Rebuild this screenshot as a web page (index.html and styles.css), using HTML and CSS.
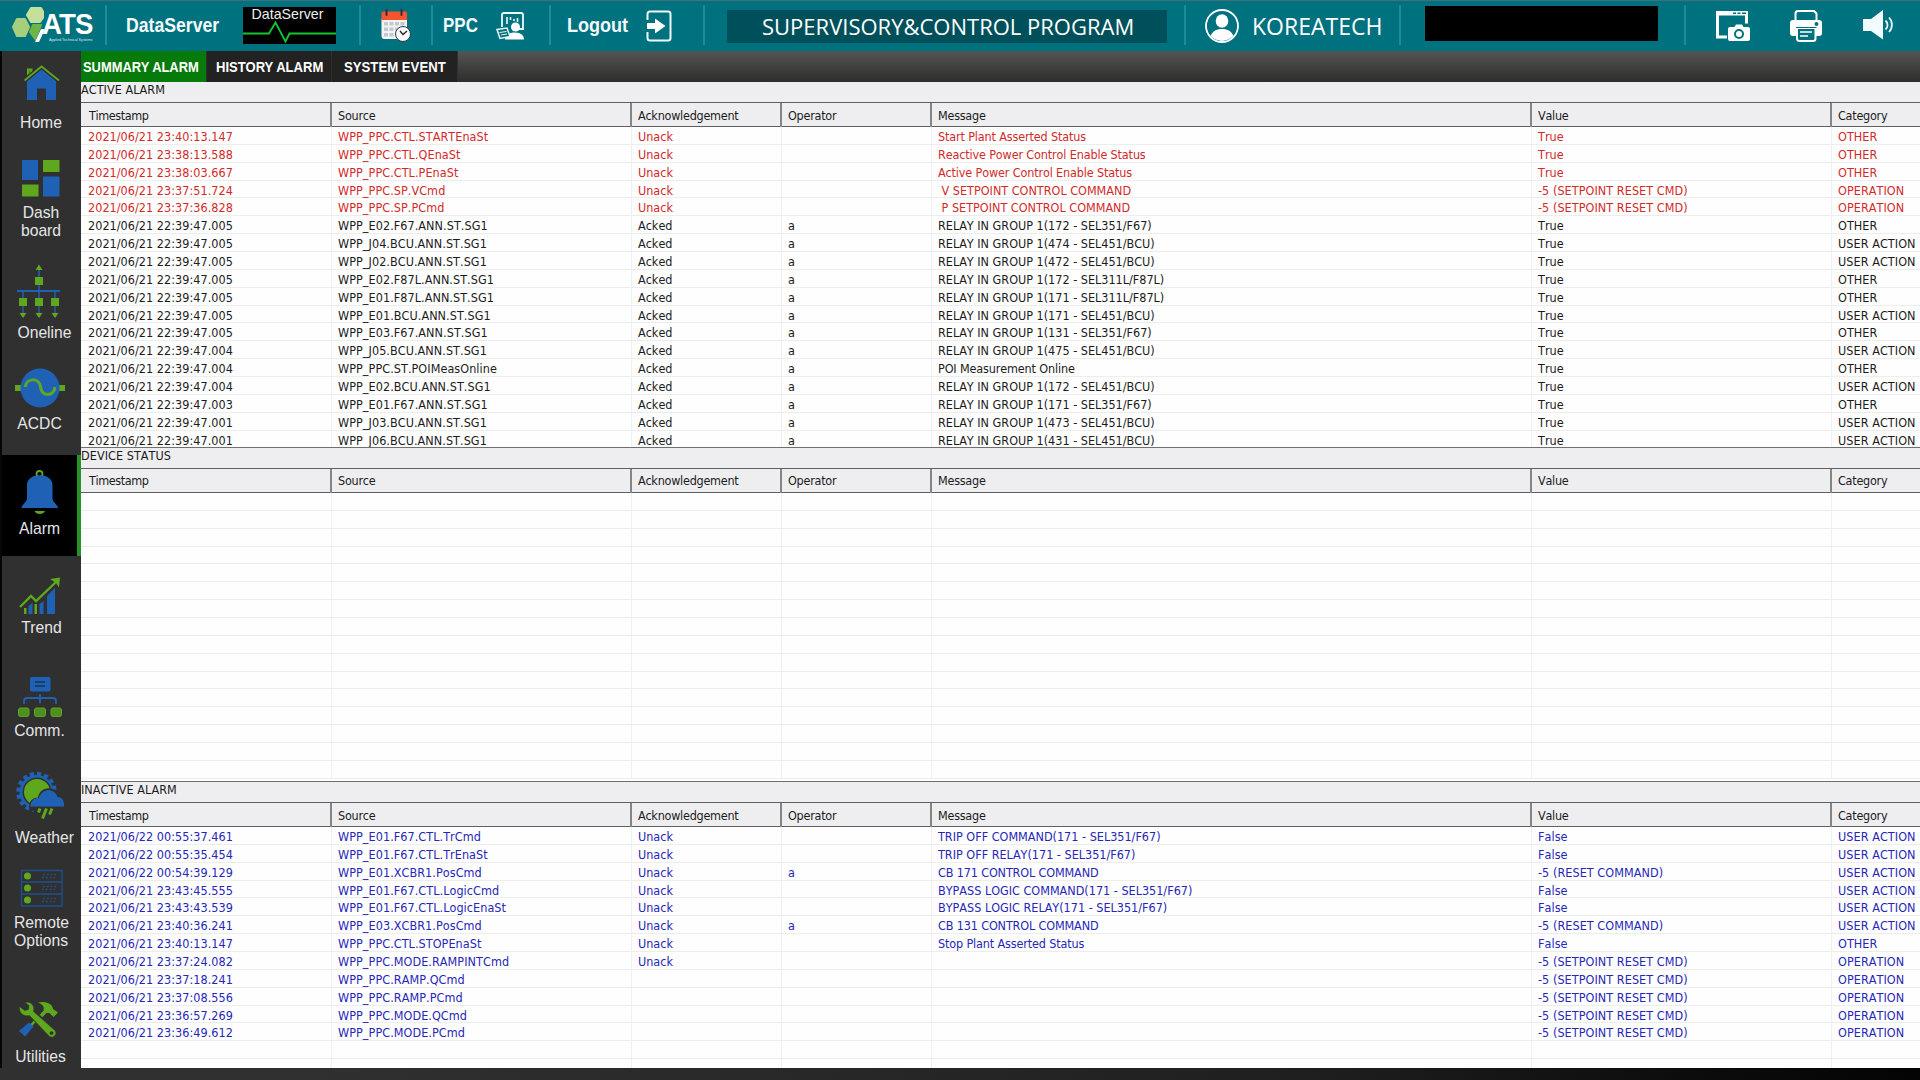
FILE: index.html
```html
<!DOCTYPE html>
<html lang="en">
<head>
<meta charset="utf-8">
<title>Supervisory &amp; Control Program</title>
<link rel="stylesheet" href="styles.css">
</head>
<body>
<header class="topbar">
  <div class="cell brand">
    <svg width="44" height="51" viewBox="0 0 44 51">
      <g stroke-linejoin="round" stroke-width="2">
        <path d="M31 8h10l4 7-5 7H31l-4-7z" fill="#c5e09a" stroke="#c5e09a"/>
        <path d="M17 19h8l4 8-4 9h-8l-4-9z" fill="#a5cf7c" stroke="#a5cf7c"/>
        <path d="M33 25h8l-6 14-5-7z" fill="#6fb544" stroke="#6fb544"/>
      </g>
      <path d="M41 29l-6 13h4l6-13z" fill="#fff"/>
    </svg>
    <div class="brand-name">
      <span class="logo-text">ATS</span>
      <span class="logo-sub">Applied Technical Systems</span>
    </div>
  </div>
  <div class="cell data">
    <span class="nav-text w-data">DataServer</span>
    <div class="monitor">
      <span class="monitor-label">DataServer</span>
      <svg width="93" height="24" viewBox="0 0 93 24"><path d="M0 12.500H26L32.500 1.500L42.500 20.500L46.500 12.500H93" fill="none" stroke="#12c830" stroke-width="1.800"/></svg>
    </div>
  </div>
  <div class="cell cal">
    <svg width="32" height="34" viewBox="380 9 32 34">
      <path d="M381.500 19H407V36a3 3 0 0 1-3 3H384.500a3 3 0 0 1-3-3z" fill="#f3f3f3"/>
      <path d="M383.500 11.500H405a2 2 0 0 1 2 2V20H381.500V13.500a2 2 0 0 1 2-2z" fill="#f4552f"/>
      <path d="M386.500 10v5M401.500 10v5" stroke="#3a2a36" stroke-width="2" stroke-linecap="round"/>
      <g fill="#c3c9d0"><path d="M384 22h4v3.500h-4zM389.500 22h4v3.500h-4zM395 22h4v3.500h-4zM400.500 22h4v3.500h-4zM384 27.500h4v3.500h-4zM389.500 27.500h4v3.500h-4zM395 27.500h4v3.500h-4zM384 33h4v3.500h-4zM389.500 33h4v3.500h-4z"/></g>
      <circle cx="403" cy="34" r="7.500" fill="#fafafa" stroke="#2c3d4d" stroke-width="1"/>
      <path d="M400 31l3 3.500 4-3.500" fill="none" stroke="#222" stroke-width="1.300"/>
    </svg>
  </div>
  <div class="cell ppc">
    <span class="nav-text w-ppc">PPC</span>
    <svg width="30" height="30" viewBox="495 11 30 30">
      <path d="M502 27V15a2 2 0 0 1 2-2H521a2 2 0 0 1 2 2V29H519" fill="none" stroke="#eafafa" stroke-width="1.800"/>
      <path d="M507 24v-7M510.500 20v-3M514 21v-2M517.500 22v-4" stroke="#eafafa" stroke-width="1.600"/>
      <circle cx="515.500" cy="27" r="4.500" fill="#fff"/>
      <path d="M505 39.500c0-4 4-7 10-7s9 3 9 7z" fill="#fff"/>
      <path d="M497 29.500l10-1.500 3 8.500-10 2z" fill="#00717f" stroke="#eafafa" stroke-width="1.500"/>
      <path d="M499.500 32.500l7-1M501 35l6-1" stroke="#eafafa"/>
    </svg>
  </div>
  <div class="cell logout">
    <span class="nav-text w-logout">Logout</span>
    <svg width="28" height="34" viewBox="645 8 28 34">
      <path d="M647.500 19V13a2.500 2.500 0 0 1 2.500-2.500H668a2.500 2.500 0 0 1 2.500 2.500V37a2.500 2.500 0 0 1-2.500 2.500H650a2.500 2.500 0 0 1-2.500-2.500V31" fill="none" stroke="#eefcfc" stroke-width="2"/>
      <path d="M647 22h8V17.500L665.500 25 655 32.500V28h-8z" fill="#fff"/>
    </svg>
  </div>
  <div class="cell program"><div class="program-box"><span class="fit-title">SUPERVISORY&amp;CONTROL PROGRAM</span></div></div>
  <div class="cell user">
    <svg width="36" height="36" viewBox="0 0 36 36">
      <circle cx="18" cy="18" r="16" fill="none" stroke="#fff" stroke-width="1.800"/>
      <ellipse cx="18" cy="13" rx="6.300" ry="6.800" fill="#fff"/>
      <path d="M6.500 28C8.500 23.500 12 21 18 21S27.500 23.500 29.500 28A16 16 0 0 1 6.500 28z" fill="#fff"/>
    </svg>
    <span class="user-name">KOREATECH</span>
  </div>
  <div class="cell clock"><div class="clock-box"></div></div>
  <div class="tools">
    <svg width="36" height="34" viewBox="1715 9 36 34">
      <path fill-rule="evenodd" d="M1716 11h32v12.500h-3V15.500h-26V35.500h8V38.500h-11z" fill="#fff"/>
      <path d="M1733 13.300h3M1737.500 13.300h3M1742 13.300h4" stroke="#00717f" stroke-width="1.600"/>
      <path d="M1730 27h4.500l1.500-2.500h6l1.500 2.500h4.500a2 2 0 0 1 2 2V39a2 2 0 0 1-2 2H1730a2 2 0 0 1-2-2V29a2 2 0 0 1 2-2z" fill="#fff"/>
      <circle cx="1739" cy="34" r="4" fill="none" stroke="#00717f" stroke-width="2"/>
    </svg>
    <svg width="34" height="34" viewBox="1789 8 34 34">
      <path d="M1795.500 21V12.500a2.500 2.500 0 0 1 2.500-2.500h16l2.500 2.500V21" fill="none" stroke="#fff" stroke-width="2"/>
      <path d="M1793 19h26a3 3 0 0 1 3 3v10a3 3 0 0 1-3 3h-26a3 3 0 0 1-3-3V22a3 3 0 0 1 3-3z" fill="#fff"/>
      <path d="M1797 27h18.500v10.500a2.500 2.500 0 0 1-2.500 2.500h-13.500a2.500 2.500 0 0 1-2.500-2.500z" fill="#00717f" stroke="#fff" stroke-width="2"/>
      <path d="M1796 26.500h20.500" stroke="#00717f" stroke-width="1"/>
      <path d="M1800 31h12M1800 35h8" stroke="#fff" stroke-width="1.600"/>
      <circle cx="1816.500" cy="23" r="2" fill="#00717f"/>
    </svg>
    <svg width="34" height="34" viewBox="1861 8 34 34">
      <path d="M1863 18h8L1883 9V38.500L1871 30h-8z" fill="#f2fbff"/>
      <path d="M1885.500 19.500a6 6 0 0 1 0 9M1889 16.500a10.500 10.500 0 0 1 0 14.500" fill="none" stroke="#e4f6f8" stroke-width="1.800"/>
    </svg>
  </div>
</header>
<div class="workspace">
  <nav class="sidebar">
    <a class="item home">
      <svg width="79" height="63" viewBox="2 51 79 63">
        <path d="M27 81L41.500 69L56 81V100H46V88.500H37V100H27z" fill="#1f62b5"/>
        <path d="M28 76V69.500h3.500V73z" fill="#3c8a1c" stroke="#5fa81e" stroke-width="2"/>
        <path d="M24.500 80.500L41.500 66.500L59 80.500" fill="none" stroke="#303030" stroke-width="4.500"/>
        <path d="M24.500 80.500L41.500 66.500L59 80.500" fill="none" stroke="#5fa81e" stroke-width="1.800"/>
      </svg>
      <span>Home</span>
    </a>
    <a class="item dash">
      <svg width="79" height="54" viewBox="2 150 79 54">
        <path d="M22 160h16v20H22zM43 176.500h16.500V196.500H43z" fill="#1f62b5"/>
        <path d="M43 160h16.500v12H43zM22 184.500h16.500v12H22z" fill="#5fa81e"/>
      </svg>
      <span>Dash<br>board</span>
    </a>
    <a class="item oneline">
      <svg width="79" height="69" viewBox="2 255 79 69">
        <path d="M39 268V314M23 291V314M55 291V314" stroke="#1f62b5" stroke-width="1.500"/>
        <path d="M17 291H60" stroke="#1f62b5" stroke-width="2.200"/>
        <path d="M35 277h8v8h-8zM19 298h8v8h-8zM35 298h8v8h-8zM51 298h8v8h-8zM35.500 270L39 264.500 42.500 270zM19.500 313h7L23 318zM35.500 313h7L39 318zM51.500 313h7L55 318z" fill="#5fa81e"/>
      </svg>
      <span>Oneline</span>
    </a>
    <a class="item acdc">
      <svg width="79" height="60" viewBox="2 355 79 60">
        <path d="M15 385h6v6h-6zM59 385h6v6h-6z" fill="#5fa81e"/>
        <circle cx="40" cy="388" r="19.500" fill="#1f62b5"/>
        <path d="M25.500 387c0-9 14-10 15 0s13.500 10 14.500 0" fill="none" stroke="#5fa81e" stroke-width="3"/>
      </svg>
      <span>ACDC</span>
    </a>
    <a class="item alarm">
      <svg width="79" height="65" viewBox="2 454 79 65">
        <circle cx="39.500" cy="473" r="3" fill="none" stroke="#5fa81e" stroke-width="1.800"/>
        <path d="M34.500 510h10.500c-1.500 4-9 4-10.500 0z" fill="#5fa81e"/>
        <path d="M27 498V484c0-13 25.500-13 25.500 0V498c1 4 5.500 6 5.500 9H21.500c0-3 4.500-5 5.500-9z" fill="#1f62b5"/>
      </svg>
      <span>Alarm</span>
    </a>
    <a class="item trend">
      <svg width="79" height="63" viewBox="2 555 79 63">
        <path d="M28.500 613V605.500l4-4V613zM39.500 613V603l4-3V613zM47 613V595l8-8V613z" fill="#1f62b5"/>
        <path d="M24 613V607h2.500v6zM34.500 613v-10h2.500v10z" fill="#5fa81e"/>
        <path d="M20 606L31 595L36 600L56.500 580.500" fill="none" stroke="#5fa81e" stroke-width="2.400"/>
        <path d="M50 578l10-1.500-1 10-3-4.500z" fill="#5fa81e"/>
      </svg>
      <span>Trend</span>
    </a>
    <a class="item comm">
      <svg width="79" height="62" viewBox="2 660 79 62">
        <rect x="30" y="677" width="20.500" height="14.500" rx="2" fill="#1f62b5"/>
        <path d="M35 682h10M35 686h10" stroke="#1c3050" stroke-width="1.500"/>
        <path d="M24 704V701q0-3 3-3H53q3 0 3 3v3M40 694v9.500" fill="none" stroke="#1f62b5" stroke-width="1.800"/>
        <g fill="#4f8f22" stroke="#5fa81e"><rect x="18.500" y="708" width="10.500" height="8.500" rx="2"/><rect x="34.500" y="708" width="11" height="8.500" rx="2"/><rect x="51" y="708" width="10.500" height="8.500" rx="2"/></g>
      </svg>
      <span>Comm.</span>
    </a>
    <a class="item weather">
      <svg width="79" height="69" viewBox="2 760 79 69">
        <circle cx="36.500" cy="792" r="18" fill="none" stroke="#1f62b5" stroke-width="4.500" stroke-dasharray="4 3.070"/>
        <circle cx="36.500" cy="792" r="17" fill="#1f62b5"/>
        <circle cx="37" cy="792" r="14.500" fill="#303030"/>
        <circle cx="37" cy="792" r="13" fill="#5fa81e"/>
        <path d="M29 808c0-8 4-10 9-10.500 2-12 18-12 21-2 6 1 7 6 7 12V829H38L34 812z" fill="#303030"/>
        <path d="M30.500 806.500c0-6 4-8.500 8.500-8.500 3-10 15.500-10 18.500-1 5 0 7 5 6.500 9.500z" fill="#1f62b5"/>
        <path d="M40 808.500l-1.500 4M46.500 808.500L42.500 818.500M52 808.500l-2.500 6" stroke="#5fa81e" stroke-width="3"/>
      </svg>
      <span>Weather</span>
    </a>
    <a class="item remote">
      <svg width="79" height="54" viewBox="2 860 79 54">
        <path d="M21.500 870.500H62V906H21.500zM21.500 882H62M21.500 894H62" fill="none" stroke="#1f4f8d" stroke-width="1.400"/>
        <path d="M43 874.500H58M42 877.500H57M43 886.500H58M42 889.500H57M43 898.500H58M42 901.500H57" stroke="#24518a" stroke-width="1.500" stroke-dasharray="1.800 2"/>
        <g fill="#5fa81e"><circle cx="27.500" cy="876" r="3.500"/><circle cx="27.500" cy="888" r="3.500"/><circle cx="27.500" cy="900" r="3.500"/></g>
      </svg>
      <span>Remote<br>Options</span>
    </a>
    <a class="item util">
      <svg width="79" height="58" viewBox="2 990 79 58">
        <path d="M47.500 1009L41 1016" stroke="#5fa81e" stroke-width="3.500"/>
        <path d="M38 1002.500c6-1.500 11 0 14 3.500l1 3 5 3.500-4.500 4.500-4-4h-3l-3-3.500c1-3-1-5-5.500-7z" fill="#5fa81e"/>
        <path d="M34.500 1021.500L31 1025.500" stroke="#5fa81e" stroke-width="2.500"/>
        <path d="M29 1022.500l4.500 4-8.500 10-6-5.500z" fill="#1f62b5"/>
        <path fill-rule="evenodd" d="M25 1002.500c6-1.500 10 3 8.500 9L55 1030.500c3 4-2 9-6 5.500L29.500 1015.500c-5 1.500-11-2-10-9l5 4 4-1 .5-4zM51.500 1031.500a1.600 1.600 0 1 0 .1 0z" fill="#5fa81e" stroke="#303030" stroke-width=".5"/>
      </svg>
      <span>Utilities</span>
    </a>
  </nav>
  <main class="content">
    <div class="tabs">
      <div class="tab active"><span class="t1">SUMMARY ALARM</span></div>
      <div class="tab"><span class="t2">HISTORY ALARM</span></div>
      <div class="tab"><span class="t3">SYSTEM EVENT</span></div>
    </div>
    <section class="panel active-alarm">
      <h2>ACTIVE ALARM</h2>
      <div class="row head"><b>Timestamp</b><b>Source</b><b>Acknowledgement</b><b>Operator</b><b>Message</b><b>Value</b><b>Category</b></div>
      <div class="rows">
        <div class="row red"><i>2021/06/21 23:40:13.147</i><i>WPP_PPC.CTL.STARTEnaSt</i><i>Unack</i><i></i><i class="mixed">Start Plant Asserted Status</i><i>True</i><i>OTHER</i></div>
        <div class="row red"><i>2021/06/21 23:38:13.588</i><i>WPP_PPC.CTL.QEnaSt</i><i>Unack</i><i></i><i class="mixed">Reactive Power Control Enable Status</i><i>True</i><i>OTHER</i></div>
        <div class="row red"><i>2021/06/21 23:38:03.667</i><i>WPP_PPC.CTL.PEnaSt</i><i>Unack</i><i></i><i class="mixed">Active Power Control Enable Status</i><i>True</i><i>OTHER</i></div>
        <div class="row red"><i>2021/06/21 23:37:51.724</i><i>WPP_PPC.SP.VCmd</i><i>Unack</i><i></i><i> V SETPOINT CONTROL COMMAND</i><i>-5 (SETPOINT RESET CMD)</i><i>OPERATION</i></div>
        <div class="row red"><i>2021/06/21 23:37:36.828</i><i>WPP_PPC.SP.PCmd</i><i>Unack</i><i></i><i> P SETPOINT CONTROL COMMAND</i><i>-5 (SETPOINT RESET CMD)</i><i>OPERATION</i></div>
        <div class="row"><i>2021/06/21 22:39:47.005</i><i>WPP_E02.F67.ANN.ST.SG1</i><i>Acked</i><i>a</i><i>RELAY IN GROUP 1(172 - SEL351/F67)</i><i>True</i><i>OTHER</i></div>
        <div class="row"><i>2021/06/21 22:39:47.005</i><i>WPP_J04.BCU.ANN.ST.SG1</i><i>Acked</i><i>a</i><i>RELAY IN GROUP 1(474 - SEL451/BCU)</i><i>True</i><i>USER ACTION</i></div>
        <div class="row"><i>2021/06/21 22:39:47.005</i><i>WPP_J02.BCU.ANN.ST.SG1</i><i>Acked</i><i>a</i><i>RELAY IN GROUP 1(472 - SEL451/BCU)</i><i>True</i><i>USER ACTION</i></div>
        <div class="row"><i>2021/06/21 22:39:47.005</i><i>WPP_E02.F87L.ANN.ST.SG1</i><i>Acked</i><i>a</i><i>RELAY IN GROUP 1(172 - SEL311L/F87L)</i><i>True</i><i>OTHER</i></div>
        <div class="row"><i>2021/06/21 22:39:47.005</i><i>WPP_E01.F87L.ANN.ST.SG1</i><i>Acked</i><i>a</i><i>RELAY IN GROUP 1(171 - SEL311L/F87L)</i><i>True</i><i>OTHER</i></div>
        <div class="row"><i>2021/06/21 22:39:47.005</i><i>WPP_E01.BCU.ANN.ST.SG1</i><i>Acked</i><i>a</i><i>RELAY IN GROUP 1(171 - SEL451/BCU)</i><i>True</i><i>USER ACTION</i></div>
        <div class="row"><i>2021/06/21 22:39:47.005</i><i>WPP_E03.F67.ANN.ST.SG1</i><i>Acked</i><i>a</i><i>RELAY IN GROUP 1(131 - SEL351/F67)</i><i>True</i><i>OTHER</i></div>
        <div class="row"><i>2021/06/21 22:39:47.004</i><i>WPP_J05.BCU.ANN.ST.SG1</i><i>Acked</i><i>a</i><i>RELAY IN GROUP 1(475 - SEL451/BCU)</i><i>True</i><i>USER ACTION</i></div>
        <div class="row"><i>2021/06/21 22:39:47.004</i><i>WPP_PPC.ST.POIMeasOnline</i><i>Acked</i><i>a</i><i class="mixed">POI Measurement Online</i><i>True</i><i>OTHER</i></div>
        <div class="row"><i>2021/06/21 22:39:47.004</i><i>WPP_E02.BCU.ANN.ST.SG1</i><i>Acked</i><i>a</i><i>RELAY IN GROUP 1(172 - SEL451/BCU)</i><i>True</i><i>USER ACTION</i></div>
        <div class="row"><i>2021/06/21 22:39:47.003</i><i>WPP_E01.F67.ANN.ST.SG1</i><i>Acked</i><i>a</i><i>RELAY IN GROUP 1(171 - SEL351/F67)</i><i>True</i><i>OTHER</i></div>
        <div class="row"><i>2021/06/21 22:39:47.001</i><i>WPP_J03.BCU.ANN.ST.SG1</i><i>Acked</i><i>a</i><i>RELAY IN GROUP 1(473 - SEL451/BCU)</i><i>True</i><i>USER ACTION</i></div>
        <div class="row last"><i>2021/06/21 22:39:47.001</i><i>WPP_J06.BCU.ANN.ST.SG1</i><i>Acked</i><i>a</i><i>RELAY IN GROUP 1(431 - SEL451/BCU)</i><i>True</i><i>USER ACTION</i></div>
      </div>
    </section>
    <section class="panel device-status">
      <h2>DEVICE STATUS</h2>
      <div class="row head"><b>Timestamp</b><b>Source</b><b>Acknowledgement</b><b>Operator</b><b>Message</b><b>Value</b><b>Category</b></div>
      <div class="rows">
        <div class="row"><i></i><i></i><i></i><i></i><i></i><i></i><i></i></div>
        <div class="row"><i></i><i></i><i></i><i></i><i></i><i></i><i></i></div>
        <div class="row"><i></i><i></i><i></i><i></i><i></i><i></i><i></i></div>
        <div class="row"><i></i><i></i><i></i><i></i><i></i><i></i><i></i></div>
        <div class="row"><i></i><i></i><i></i><i></i><i></i><i></i><i></i></div>
        <div class="row"><i></i><i></i><i></i><i></i><i></i><i></i><i></i></div>
        <div class="row"><i></i><i></i><i></i><i></i><i></i><i></i><i></i></div>
        <div class="row"><i></i><i></i><i></i><i></i><i></i><i></i><i></i></div>
        <div class="row"><i></i><i></i><i></i><i></i><i></i><i></i><i></i></div>
        <div class="row"><i></i><i></i><i></i><i></i><i></i><i></i><i></i></div>
        <div class="row"><i></i><i></i><i></i><i></i><i></i><i></i><i></i></div>
        <div class="row"><i></i><i></i><i></i><i></i><i></i><i></i><i></i></div>
        <div class="row"><i></i><i></i><i></i><i></i><i></i><i></i><i></i></div>
        <div class="row"><i></i><i></i><i></i><i></i><i></i><i></i><i></i></div>
        <div class="row"><i></i><i></i><i></i><i></i><i></i><i></i><i></i></div>
        <div class="row"><i></i><i></i><i></i><i></i><i></i><i></i><i></i></div>
      </div>
    </section>
    <section class="panel inactive-alarm">
      <h2>INACTIVE ALARM</h2>
      <div class="row head"><b>Timestamp</b><b>Source</b><b>Acknowledgement</b><b>Operator</b><b>Message</b><b>Value</b><b>Category</b></div>
      <div class="rows">
        <div class="row blue"><i>2021/06/22 00:55:37.461</i><i>WPP_E01.F67.CTL.TrCmd</i><i>Unack</i><i></i><i>TRIP OFF COMMAND(171 - SEL351/F67)</i><i>False</i><i>USER ACTION</i></div>
        <div class="row blue"><i>2021/06/22 00:55:35.454</i><i>WPP_E01.F67.CTL.TrEnaSt</i><i>Unack</i><i></i><i>TRIP OFF RELAY(171 - SEL351/F67)</i><i>False</i><i>USER ACTION</i></div>
        <div class="row blue"><i>2021/06/22 00:54:39.129</i><i>WPP_E01.XCBR1.PosCmd</i><i>Unack</i><i>a</i><i class="mixed">CB 171 CONTROL COMMAND</i><i>-5 (RESET COMMAND)</i><i>USER ACTION</i></div>
        <div class="row blue"><i>2021/06/21 23:43:45.555</i><i>WPP_E01.F67.CTL.LogicCmd</i><i>Unack</i><i></i><i>BYPASS LOGIC COMMAND(171 - SEL351/F67)</i><i>False</i><i>USER ACTION</i></div>
        <div class="row blue"><i>2021/06/21 23:43:43.539</i><i>WPP_E01.F67.CTL.LogicEnaSt</i><i>Unack</i><i></i><i>BYPASS LOGIC RELAY(171 - SEL351/F67)</i><i>False</i><i>USER ACTION</i></div>
        <div class="row blue"><i>2021/06/21 23:40:36.241</i><i>WPP_E03.XCBR1.PosCmd</i><i>Unack</i><i>a</i><i class="mixed">CB 131 CONTROL COMMAND</i><i>-5 (RESET COMMAND)</i><i>USER ACTION</i></div>
        <div class="row blue"><i>2021/06/21 23:40:13.147</i><i>WPP_PPC.CTL.STOPEnaSt</i><i>Unack</i><i></i><i class="mixed">Stop Plant Asserted Status</i><i>False</i><i>OTHER</i></div>
        <div class="row blue"><i>2021/06/21 23:37:24.082</i><i>WPP_PPC.MODE.RAMPINTCmd</i><i>Unack</i><i></i><i></i><i>-5 (SETPOINT RESET CMD)</i><i>OPERATION</i></div>
        <div class="row blue"><i>2021/06/21 23:37:18.241</i><i>WPP_PPC.RAMP.QCmd</i><i></i><i></i><i></i><i>-5 (SETPOINT RESET CMD)</i><i>OPERATION</i></div>
        <div class="row blue"><i>2021/06/21 23:37:08.556</i><i>WPP_PPC.RAMP.PCmd</i><i></i><i></i><i></i><i>-5 (SETPOINT RESET CMD)</i><i>OPERATION</i></div>
        <div class="row blue"><i>2021/06/21 23:36:57.269</i><i>WPP_PPC.MODE.QCmd</i><i></i><i></i><i></i><i>-5 (SETPOINT RESET CMD)</i><i>OPERATION</i></div>
        <div class="row blue"><i>2021/06/21 23:36:49.612</i><i>WPP_PPC.MODE.PCmd</i><i></i><i></i><i></i><i>-5 (SETPOINT RESET CMD)</i><i>OPERATION</i></div>
        <div class="row"><i></i><i></i><i></i><i></i><i></i><i></i><i></i></div>
        <div class="row"><i></i><i></i><i></i><i></i><i></i><i></i><i></i></div>
      </div>
    </section>
  </main>
</div>
<footer class="bottom"></footer>
</body>
</html>
```
FILE: styles.css
```css
* { box-sizing: border-box; }
body {
  margin: 0;
  width: 1920px;
  height: 1080px;
  overflow: hidden;
  background: #303030;
  font-family: "Liberation Sans", Arial, sans-serif;
}
svg { display: block; flex: none; }

/* Top bar */
.topbar {
  display: flex;
  height: 51px;
  background: #00717f;
  box-shadow: inset 0 1px #3d7378;
  color: #f2fbfb;
}
.cell {
  display: flex;
  align-items: center;
  flex: none;
  background: linear-gradient(#1b8d99, #1b8d99) right 5px / 2px 40px no-repeat;
}
.brand { width: 107px; }
.data { width: 254px; padding-left: 19px; }
.cal { width: 72px; padding-left: 19px; }
.ppc { width: 118px; padding-left: 10px; }
.logout { width: 154px; padding-left: 16px; }
.program { width: 481px; padding-left: 22px; padding-top: 2px; }
.user { width: 215px; padding-left: 18px; }
.clock { width: 285px; padding-left: 24px; align-items: flex-start; padding-top: 6px; }
.tools { display: flex; align-items: center; padding-left: 29px; }
.tools svg + svg { margin-left: 38px; }
.brand-name {
  display: flex;
  flex-direction: column;
  align-items: flex-start;
  width: 56px;
  padding-top: 1px;
  margin-left: -2px;
  white-space: nowrap;
}
.logo-text {
  font-size: 30px;
  font-weight: bold;
  line-height: 27px;
  letter-spacing: -1px;
  color: #fff;
  transform-origin: left center;
  transform: scaleX(.92);
}
.logo-sub {
  margin-left: 7px;
  font-size: 4px;
  line-height: 5px;
  color: #d0eeee;
  transform-origin: left center;
  transform: scaleX(.92);
}
.nav-text {
  font-size: 19.500px;
  font-weight: bold;
  white-space: nowrap;
  transform-origin: left center;
}
.w-data { width: 117px; transform: scaleX(.905); }
.w-ppc { width: 52px; transform: scaleX(.87); }
.w-logout { width: 78px; transform: scaleX(.925); }
.monitor {
  width: 93px;
  height: 37px;
  background: #000;
  display: flex;
  flex-direction: column;
  align-items: center;
}
.monitor-label { font-size: 14.200px; line-height: 14px; height: 14px; padding-right: 4px; color: #eee; }
.program-box {
  width: 440px;
  height: 33px;
  padding-left: 35px;
  background: #00505b;
  font: 22px/32px "Open Sans", "Noto Sans", sans-serif;
  white-space: nowrap;
  color: #fff;
}
.user-name {
  margin-left: 12px;
  font: 23px/40px "Open Sans", "Noto Sans", sans-serif;
  color: #fff;
}
.clock-box { width: 233px; height: 35px; background: #000; }

/* Side navigation */
.workspace { display: flex; height: 1017px; }
.sidebar {
  width: 81px;
  flex: none;
  border-left: 2px solid #060606;
  background: #303030;
  overflow: hidden;
}
.item {
  display: flex;
  flex-direction: column;
  align-items: center;
  color: #e6e6e6;
  font-size: 15.700px;
  line-height: 18px;
  text-align: center;
  white-space: nowrap;
}
.home { height: 99px; }
.dash { height: 105px; }
.oneline { height: 100px; }
.acdc { height: 100px; }
.alarm { height: 101px; background: #000; box-shadow: inset -4px 0 #259328; }
.trend { height: 104px; }
.comm { height: 100px; }
.weather { height: 100px; }
.remote { height: 130px; text-align: left; }
.util { height: 90px; }
.dash span, .home span { padding-right: 1px; }
.util span { padding-right: 2px; }
.oneline span, .weather span { padding-left: 6px; }
.acdc span, .comm span, .alarm span { padding-right: 4px; }

/* Tabs */
.content { flex: 1; min-width: 0; background: #eeeef0; }
.tabs {
  display: flex;
  height: 31px;
  background: linear-gradient(#545553, #2e2d2d);
}
.tab {
  width: 125.500px;
  background: #222;
  border-right: 1px solid #303030;
  color: #fff;
  font-size: 14.800px;
  font-weight: bold;
  line-height: 33px;
  white-space: nowrap;
}
.tab.active { background: #067a0a; }
.tab span { display: inline-block; transform-origin: left center; }
.t1 { margin-left: 2px; transform: scaleX(.873); }
.t2 { margin-left: 9px; transform: scaleX(.882); }
.t3 { margin-left: 12px; transform: scaleX(.89); }

/* Alarm tables */
.panel {
  display: flex;
  flex-direction: column;
  font-family: "DejaVu Sans Condensed", "DejaVu Sans", sans-serif;
  font-stretch: condensed;
  font-size: 12.500px;
  font-kerning: none;
  color: #1b1b1b;
}
.active-alarm { height: 366px; }
.device-status { height: 334px; }
.inactive-alarm { height: 286px; }
h2 {
  height: 20px;
  margin: 0;
  font-size: 12.500px;
  font-weight: normal;
  line-height: 16px;
  letter-spacing: .06px;
  flex: none;
}
.row {
  display: grid;
  grid-template-columns: 251px 300px 150px 150px 600px 300px 88px;
  height: 17.860px;
  flex: none;
}
.head {
  height: 25px;
  border-top: 1px solid #606060;
  border-bottom: 1px solid #606060;
  line-height: 25px;
}
.device-status .head { line-height: 24px; }
.head b { font-weight: normal; padding-left: 6px; border-right: 2px solid #858585; letter-spacing: -.25px; }
.head b:first-child { padding-left: 8px; letter-spacing: -.4px; }
.head b:last-child, .row i:last-child { border-right: 0; }
.rows { flex: 1; overflow: hidden; background: #fefefe; border-bottom: 1px solid #707070; }
.inactive-alarm .rows { border-bottom: 0; }
.rows .row { border-bottom: 1px solid #ededed; }
.rows .row.last { border-bottom: 0; }
.rows i {
  font-style: normal;
  padding-left: 6px;
  border-right: 1px solid #f1f1f1;
  line-height: 19px;
  white-space: pre;
}
.rows i:first-child { padding-left: 7px; letter-spacing: .04px; }
.rows i:nth-child(2) { letter-spacing: .06px; }
.rows i:nth-child(6), .rows i:nth-child(7) { letter-spacing: .06px; }
.rows i.mixed { letter-spacing: -.14px; }
.red { color: #d22a2a; }
.blue { color: #2626b8; }
.bottom { height: 12px; background: linear-gradient(90deg, #303030 16%, #282828 42%, #1f1f1f 68%, #0c0c0c 88%, #040404); }
```
